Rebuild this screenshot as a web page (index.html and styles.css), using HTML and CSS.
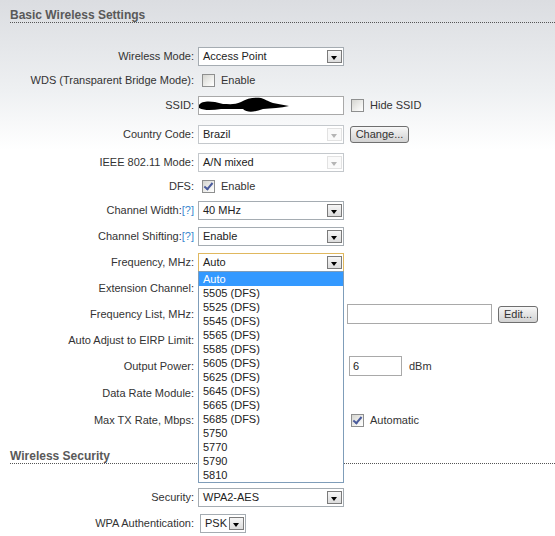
FILE: index.html
```html
<!DOCTYPE html>
<html lang="en">
<head>
    <meta charset="UTF-8">
    <title>Wireless</title>
    <link rel="stylesheet" href="styles.css">
</head>
<body>
    <h2 class="section-title">Basic Wireless Settings</h2>
    <div class="form">
        <div class="row">
            <label class="lbl">Wireless Mode:</label>
            <div class="select"><span>Access Point</span><i class="arrow"></i></div>
        </div>
        <div class="row row-sm">
            <label class="lbl">WDS (Transparent Bridge Mode):</label>
            <div class="check"><span class="cb"></span>Enable</div>
        </div>
        <div class="row row-lg">
            <label class="lbl">SSID:</label>
            <div class="input">
                <!-- redacted ssid -->
                <svg class="scribble" width="92" height="17" viewBox="0 0 92 17">
                    <path d="M0,8 C2,4 10,4 16,5 L24,7 C30,7 36,8 42,5 C48,1 56,0 62,1 C66,2 68,4 74,6 L90,9 C82,11 72,11 64,12 C56,15 48,16 44,12 C38,12 30,12 22,12 C14,13 6,14 0,11 Z" fill="#000"/>
                </svg>
            </div>
            <div class="extra check"><span class="cb"></span>Hide SSID</div>
        </div>
        <div class="row row-xl">
            <label class="lbl">Country Code:</label>
            <div class="select disabled"><span>Brazil</span><i class="arrow"></i></div>
            <div class="extra"><button class="btn btn-change">Change...</button></div>
        </div>
        <div class="row">
            <label class="lbl">IEEE 802.11 Mode:</label>
            <div class="select disabled"><span>A/N mixed</span><i class="arrow"></i></div>
        </div>
        <div class="row row-sm">
            <label class="lbl">DFS:</label>
            <div class="check"><span class="cb checked"></span>Enable</div>
        </div>
        <div class="row">
            <label class="lbl">Channel Width:<a class="help">[?]</a></label>
            <div class="select"><span>40 MHz</span><i class="arrow"></i></div>
        </div>
        <div class="row">
            <label class="lbl">Channel Shifting:<a class="help">[?]</a></label>
            <div class="select"><span>Enable</span><i class="arrow"></i></div>
        </div>
        <div class="row">
            <label class="lbl">Frequency, MHz:</label>
            <div class="combo">
                <div class="select focused"><span>Auto</span><i class="arrow"></i></div>
                <ul class="dropdown">
                    <li class="sel">Auto</li>
                    <li>5505 (DFS)</li>
                    <li>5525 (DFS)</li>
                    <li>5545 (DFS)</li>
                    <li>5565 (DFS)</li>
                    <li>5585 (DFS)</li>
                    <li>5605 (DFS)</li>
                    <li>5625 (DFS)</li>
                    <li>5645 (DFS)</li>
                    <li>5665 (DFS)</li>
                    <li>5685 (DFS)</li>
                    <li>5750</li>
                    <li>5770</li>
                    <li>5790</li>
                    <li>5810</li>
                </ul>
            </div>
        </div>
        <!-- the controls of the next rows sit under the open list -->
        <div class="row">
            <label class="lbl">Extension Channel:</label>
            <div></div>
        </div>
        <div class="row">
            <label class="lbl">Frequency List, MHz:</label>
            <div></div>
            <div class="extra freq-list">
                <div class="input input-list"></div>
                <button class="btn btn-edit">Edit...</button>
            </div>
        </div>
        <div class="row">
            <label class="lbl">Auto Adjust to EIRP Limit:</label>
            <div></div>
        </div>
        <div class="row">
            <label class="lbl">Output Power:</label>
            <div></div>
            <div class="extra power">
                <div class="input input-power">6</div>
                <span class="unit">dBm</span>
            </div>
        </div>
        <div class="row row-lg">
            <label class="lbl">Data Rate Module:</label>
            <div></div>
        </div>
        <div class="row">
            <label class="lbl">Max TX Rate, Mbps:</label>
            <div></div>
            <div class="extra check"><span class="cb checked"></span>Automatic</div>
        </div>
    </div>

    <h2 class="section-title second">Wireless Security</h2>
    <div class="form">
        <div class="row">
            <label class="lbl">Security:</label>
            <div class="select"><span>WPA2-AES</span><i class="arrow"></i></div>
        </div>
        <div class="row">
            <label class="lbl">WPA Authentication:</label>
            <div class="select select-small"><span>PSK</span><i class="arrow"></i></div>
        </div>
    </div>
</body>
</html>
```

FILE: styles.css
```css
html {
    background: #fff;
}

body {
    margin: 0;
    min-height: 536px;
    overflow: hidden;
    font-family: "Liberation Sans", Arial, sans-serif;
    font-size: 11px;
    color: #333;
    background: linear-gradient(#dbdde1, #eef0f2 90px, #fff 150px);
}

.section-title {
    margin: 0 0 0 10px;
    padding-top: 8px;
    font-size: 12px;
    line-height: 14px;
    font-weight: bold;
    color: #595959;
    border-bottom: 1px dotted #555;
}

.section-title.second {
    margin-top: 8px;
}

.form {
    margin: 20px 0 0 10px;
}

.row {
    display: grid;
    grid-template-columns: 184px 146px auto;
    column-gap: 4px;
    align-items: center;
    height: 26px;
}

.row-sm {
    height: 22px;
}

.row-lg {
    height: 28px;
}

.row-xl {
    height: 30px;
}

.lbl {
    text-align: right;
    white-space: nowrap;
}

.help {
    color: #3a8ad0;
}

/* fake selects */
.select {
    display: flex;
    align-items: center;
    box-sizing: border-box;
    width: 146px;
    height: 19px;
    padding-left: 4px;
    background: #fff;
    border: 1px solid #a5acb2;
    color: #222;
}

.select .arrow {
    position: relative;
    margin-left: auto;
    margin-right: 1px;
    width: 15px;
    height: 13px;
    box-sizing: border-box;
    border: 1px solid #7b7b7b;
    background: linear-gradient(#f6f6f6, #dcdcdc);
}

.select .arrow::after {
    content: "";
    position: absolute;
    left: 3px;
    top: 5px;
    border-left: 3.5px solid transparent;
    border-right: 3.5px solid transparent;
    border-top: 4px solid #000;
}

.select.disabled {
    border-color: #c4c8cc;
}

.select.disabled .arrow {
    border-color: #e2e2e2;
    background: #fafafa;
}

.select.disabled .arrow::after {
    border-top-color: #b5b5b5;
}

.select.focused {
    border-color: #e0b85e;
}

.select-small {
    width: 46px;
    margin-left: 2px;
}

.combo {
    position: relative;
}

.dropdown {
    position: absolute;
    top: 18px;
    left: 0;
    z-index: 10;
    box-sizing: border-box;
    width: 146px;
    margin: 0;
    padding: 0;
    list-style: none;
    background: #fff;
    border: 1px solid #7f9db9;
    color: #222;
}

.dropdown li {
    height: 14px;
    line-height: 14px;
    padding-left: 4px;
}

.dropdown li.sel {
    background: #3399ff;
    color: #fff;
}

/* checkboxes */
.check {
    display: flex;
    align-items: center;
    gap: 6px;
    white-space: nowrap;
}

.cb {
    position: relative;
    box-sizing: border-box;
    width: 13px;
    height: 13px;
    margin-left: 4px;
    border: 1px solid #8e8f8f;
    background: linear-gradient(135deg, #d5d5d0, #f4f4f2 70%, #fff);
}

.cb.checked::after {
    content: "";
    position: absolute;
    left: 3px;
    top: 0px;
    width: 3px;
    height: 7px;
    border-right: 2px solid #4a5b9c;
    border-bottom: 2px solid #4a5b9c;
    transform: rotate(40deg);
}

.extra.check .cb {
    margin-left: 3px;
}

/* text inputs */
.input {
    position: relative;
    box-sizing: border-box;
    width: 146px;
    height: 19px;
    background: #fff;
    border: 1px solid #a9a9a9;
}

.scribble {
    position: absolute;
    left: 0;
    top: 0;
}

.freq-list {
    display: flex;
    align-items: center;
    gap: 6px;
    margin-left: -1px;
}

.input-list {
    width: 145px;
    height: 20px;
}

.power {
    display: flex;
    align-items: center;
    gap: 7px;
    margin-left: 1px;
}

.input-power {
    width: 53px;
    height: 20px;
    padding-left: 3px;
    line-height: 18px;
    color: #222;
}

/* buttons */
.btn {
    box-sizing: border-box;
    height: 17px;
    padding: 0;
    font-family: inherit;
    font-size: 11px;
    color: #333;
    border: 1px solid #6f6f6f;
    border-radius: 3px;
    background: linear-gradient(#f7f7f7, #e4e4e4 50%, #d2d2d2);
}

.btn-change {
    width: 59px;
    margin-left: 2px;
}

.btn-edit {
    width: 40px;
}
```
